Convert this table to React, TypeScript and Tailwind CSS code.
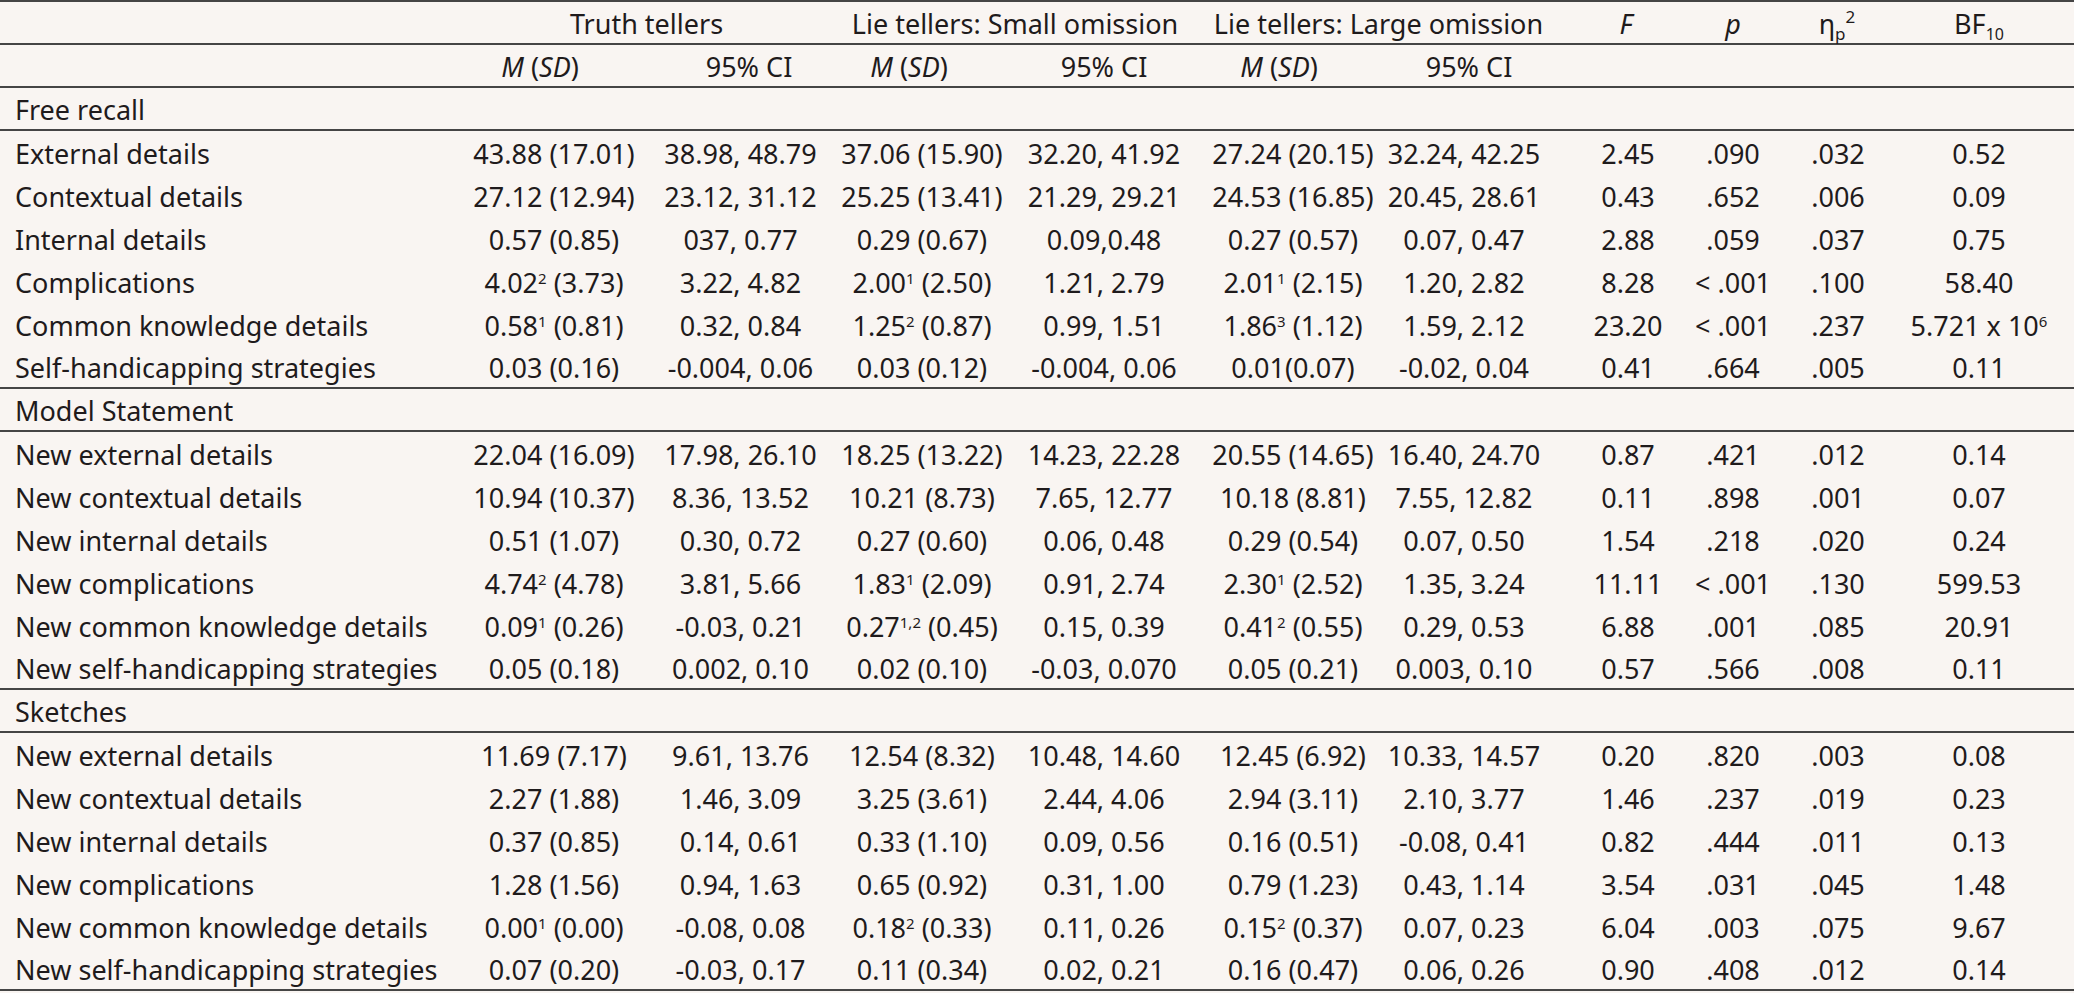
import React from "react";

type MS = { m: string; s?: string; sd: string; tight?: boolean };
type Row = {
  label: string;
  a: MS;
  aci: string;
  b: MS;
  bci: string;
  c: MS;
  cci: string;
  f: string;
  p: string;
  eta: string;
  bf: React.ReactNode;
};

const ms = (m: string, sd: string, s?: string, tight?: boolean): MS => ({ m, sd, s, tight });

const freeRecall: Row[] = [
  { label: "External details", a: ms("43.88", "17.01"), aci: "38.98, 48.79", b: ms("37.06", "15.90"), bci: "32.20, 41.92", c: ms("27.24", "20.15"), cci: "32.24, 42.25", f: "2.45", p: ".090", eta: ".032", bf: "0.52" },
  { label: "Contextual details", a: ms("27.12", "12.94"), aci: "23.12, 31.12", b: ms("25.25", "13.41"), bci: "21.29, 29.21", c: ms("24.53", "16.85"), cci: "20.45, 28.61", f: "0.43", p: ".652", eta: ".006", bf: "0.09" },
  { label: "Internal details", a: ms("0.57", "0.85"), aci: "037, 0.77", b: ms("0.29", "0.67"), bci: "0.09,0.48", c: ms("0.27", "0.57"), cci: "0.07, 0.47", f: "2.88", p: ".059", eta: ".037", bf: "0.75" },
  { label: "Complications", a: ms("4.02", "3.73", "2"), aci: "3.22, 4.82", b: ms("2.00", "2.50", "1"), bci: "1.21, 2.79", c: ms("2.01", "2.15", "1"), cci: "1.20, 2.82", f: "8.28", p: "< .001", eta: ".100", bf: "58.40" },
  {
    label: "Common knowledge details",
    a: ms("0.58", "0.81", "1"),
    aci: "0.32, 0.84",
    b: ms("1.25", "0.87", "2"),
    bci: "0.99, 1.51",
    c: ms("1.86", "1.12", "3"),
    cci: "1.59, 2.12",
    f: "23.20",
    p: "< .001",
    eta: ".237",
    bf: (
      <span>
        5.721 x 10<sup className="relative -top-[9px] align-baseline text-[15px] leading-none">6</sup>
      </span>
    ),
  },
  { label: "Self-handicapping strategies", a: ms("0.03", "0.16"), aci: "-0.004, 0.06", b: ms("0.03", "0.12"), bci: "-0.004, 0.06", c: ms("0.01", "0.07", undefined, true), cci: "-0.02, 0.04", f: "0.41", p: ".664", eta: ".005", bf: "0.11" },
];

const modelStatement: Row[] = [
  { label: "New external details", a: ms("22.04", "16.09"), aci: "17.98, 26.10", b: ms("18.25", "13.22"), bci: "14.23, 22.28", c: ms("20.55", "14.65"), cci: "16.40, 24.70", f: "0.87", p: ".421", eta: ".012", bf: "0.14" },
  { label: "New contextual details", a: ms("10.94", "10.37"), aci: "8.36, 13.52", b: ms("10.21", "8.73"), bci: "7.65, 12.77", c: ms("10.18", "8.81"), cci: "7.55, 12.82", f: "0.11", p: ".898", eta: ".001", bf: "0.07" },
  { label: "New internal details", a: ms("0.51", "1.07"), aci: "0.30, 0.72", b: ms("0.27", "0.60"), bci: "0.06, 0.48", c: ms("0.29", "0.54"), cci: "0.07, 0.50", f: "1.54", p: ".218", eta: ".020", bf: "0.24" },
  { label: "New complications", a: ms("4.74", "4.78", "2"), aci: "3.81, 5.66", b: ms("1.83", "2.09", "1"), bci: "0.91, 2.74", c: ms("2.30", "2.52", "1"), cci: "1.35, 3.24", f: "11.11", p: "< .001", eta: ".130", bf: "599.53" },
  { label: "New common knowledge details", a: ms("0.09", "0.26", "1"), aci: "-0.03, 0.21", b: ms("0.27", "0.45", "1,2"), bci: "0.15, 0.39", c: ms("0.41", "0.55", "2"), cci: "0.29, 0.53", f: "6.88", p: ".001", eta: ".085", bf: "20.91" },
  { label: "New self-handicapping strategies", a: ms("0.05", "0.18"), aci: "0.002, 0.10", b: ms("0.02", "0.10"), bci: "-0.03, 0.070", c: ms("0.05", "0.21"), cci: "0.003, 0.10", f: "0.57", p: ".566", eta: ".008", bf: "0.11" },
];

const sketches: Row[] = [
  { label: "New external details", a: ms("11.69", "7.17"), aci: "9.61, 13.76", b: ms("12.54", "8.32"), bci: "10.48, 14.60", c: ms("12.45", "6.92"), cci: "10.33, 14.57", f: "0.20", p: ".820", eta: ".003", bf: "0.08" },
  { label: "New contextual details", a: ms("2.27", "1.88"), aci: "1.46, 3.09", b: ms("3.25", "3.61"), bci: "2.44, 4.06", c: ms("2.94", "3.11"), cci: "2.10, 3.77", f: "1.46", p: ".237", eta: ".019", bf: "0.23" },
  { label: "New internal details", a: ms("0.37", "0.85"), aci: "0.14, 0.61", b: ms("0.33", "1.10"), bci: "0.09, 0.56", c: ms("0.16", "0.51"), cci: "-0.08, 0.41", f: "0.82", p: ".444", eta: ".011", bf: "0.13" },
  { label: "New complications", a: ms("1.28", "1.56"), aci: "0.94, 1.63", b: ms("0.65", "0.92"), bci: "0.31, 1.00", c: ms("0.79", "1.23"), cci: "0.43, 1.14", f: "3.54", p: ".031", eta: ".045", bf: "1.48" },
  { label: "New common knowledge details", a: ms("0.00", "0.00", "1"), aci: "-0.08, 0.08", b: ms("0.18", "0.33", "2"), bci: "0.11, 0.26", c: ms("0.15", "0.37", "2"), cci: "0.07, 0.23", f: "6.04", p: ".003", eta: ".075", bf: "9.67" },
  { label: "New self-handicapping strategies", a: ms("0.07", "0.20"), aci: "-0.03, 0.17", b: ms("0.11", "0.34"), bci: "0.02, 0.21", c: ms("0.16", "0.47"), cci: "0.06, 0.26", f: "0.90", p: ".408", eta: ".012", bf: "0.14" },
];

const GRID =
  "grid grid-cols-[460px_188px_185px_178px_186px_181px_182px_136px_74px_136px_146px_1fr] h-[43px] items-center pt-[2px]";
const LINE = "border-b-2 border-[#454545]";

function Cell({ children, className = "" }: { children?: React.ReactNode; className?: string }) {
  return <div className={`flex justify-center whitespace-nowrap ${className}`}>{children}</div>;
}

function MSD({ v }: { v: MS }) {
  return (
    <span>
      {v.m}
      {v.s ? (
        <sup className="relative -top-[9px] align-baseline text-[15px] leading-none">{v.s}</sup>
      ) : null}
      {v.tight ? "" : " "}({v.sd})
    </span>
  );
}

function DataRow({ r, last }: { r: Row; last?: boolean }) {
  return (
    <div className={`${GRID} ${last ? LINE : ""}`}>
      <div className="pl-[15px] whitespace-nowrap">{r.label}</div>
      <Cell>
        <MSD v={r.a} />
      </Cell>
      <Cell>{r.aci}</Cell>
      <Cell>
        <MSD v={r.b} />
      </Cell>
      <Cell>{r.bci}</Cell>
      <Cell className="pl-[11px]">
        <MSD v={r.c} />
      </Cell>
      <Cell className="pr-[10px]">{r.cci}</Cell>
      <Cell>{r.f}</Cell>
      <Cell>{r.p}</Cell>
      <Cell>{r.eta}</Cell>
      <Cell>{r.bf}</Cell>
      <div />
    </div>
  );
}

function SectionRow({ title }: { title: string }) {
  return (
    <div className={`${GRID} ${LINE}`}>
      <div className="pl-[15px] whitespace-nowrap">{title}</div>
    </div>
  );
}

function Section({ title, rows }: { title: string; rows: Row[] }) {
  return (
    <>
      <SectionRow title={title} />
      {rows.map((r, i) => (
        <DataRow key={title + i} r={r} last={i === rows.length - 1} />
      ))}
    </>
  );
}

export default function App() {
  return (
    <div className="min-h-screen w-full bg-[#f9f5f2] text-[#1f1b1c] font-['Noto_Sans','DejaVu_Sans',sans-serif] text-[27px] leading-none">
      <div className="border-t-2 border-[#454545]">
        <div className={`${GRID} ${LINE}`}>
          <div />
          <Cell className="col-span-2">Truth tellers</Cell>
          <Cell className="col-span-2">Lie tellers: Small omission</Cell>
          <Cell className="col-span-2">Lie tellers: Large omission</Cell>
          <Cell className="pr-[4px] italic">F</Cell>
          <Cell className="italic">p</Cell>
          <Cell className="pr-[2px]">
            <span>
              η
              <sub className="relative top-[6px] align-baseline text-[17px] leading-none">p</sub>
              <sup className="relative -top-[11px] align-baseline text-[17px] leading-none">2</sup>
            </span>
          </Cell>
          <Cell>
            <span>
              BF
              <sub className="relative top-[6px] align-baseline text-[16px] leading-none">10</sub>
            </span>
          </Cell>
          <div />
        </div>
        <div className={`${GRID} ${LINE}`}>
          <div />
          <Cell className="pr-[28px]">
            <span>
              <i>M</i> (<i>SD</i>)
            </span>
          </Cell>
          <Cell className="pl-[17px]">95% CI</Cell>
          <Cell className="pr-[26px]">
            <span>
              <i>M</i> (<i>SD</i>)
            </span>
          </Cell>
          <Cell>95% CI</Cell>
          <Cell className="pr-[17px]">
            <span>
              <i>M</i> (<i>SD</i>)
            </span>
          </Cell>
          <Cell>95% CI</Cell>
          <div />
          <div />
          <div />
          <div />
          <div />
        </div>
        <Section title="Free recall" rows={freeRecall} />
        <Section title="Model Statement" rows={modelStatement} />
        <Section title="Sketches" rows={sketches} />
      </div>
    </div>
  );
}
